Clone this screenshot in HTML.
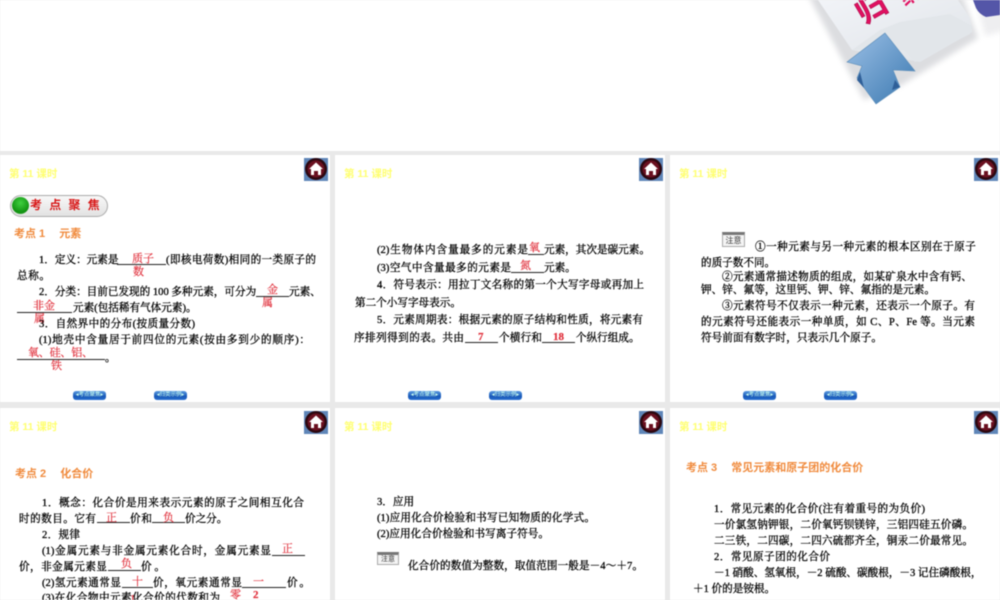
<!DOCTYPE html>
<html lang="zh"><head><meta charset="utf-8"><title>第11课时</title>
<style>
html,body{margin:0;padding:0;background:#e9e9e9;width:1000px;height:600px;overflow:hidden}
#w{position:relative;width:1000px;height:600px;overflow:hidden;filter:blur(.45px)}
.p{position:absolute;background:#fff}
.t,.r,.o,.y{position:absolute;white-space:nowrap;line-height:14px;height:14px}
.t{font-family:"Liberation Serif","Noto Serif CJK SC",serif;font-size:10.6px;color:#000;text-align:justify;text-align-last:justify;-webkit-text-stroke:.3px #000;margin-top:2px}
.r{font-family:"Liberation Serif","Noto Serif CJK SC",serif;font-size:11px;color:#e0303c;-webkit-text-stroke:.2px #e0303c;margin-top:1px}
.o{font-family:"Liberation Sans","Noto Sans CJK SC",sans-serif;font-size:11px;font-weight:bold;color:#f08a3c;margin-top:1px}
.y{font-family:"Liberation Sans","Noto Sans CJK SC",sans-serif;font-size:10.5px;font-weight:bold;color:#ffff70;left:9px;margin-top:1px}
.u{position:absolute;height:1px;background:#222}
.h{position:absolute;width:24px;height:23px}
.b{position:absolute;width:33px;height:9px;border-radius:3px;background:linear-gradient(#5a9ae0,#1858b8 60%,#2a70d0);color:#cfe;font:5.5px/9px "Liberation Sans","Noto Sans CJK SC",sans-serif;text-align:center}
.n{position:absolute;box-sizing:border-box;background:#f4f4f4;border:1px solid #aaa;border-top:3px solid #777;font:8px/11px "Liberation Sans","Noto Sans CJK SC",sans-serif;color:#333;text-align:center}
</style></head><body><div id="w">
<div class="p" style="left:0;top:0;width:1000px;height:151px"></div>
<div class="p" style="left:0;top:155px;width:330px;height:247px"></div>
<div class="p" style="left:335px;top:155px;width:330px;height:247px"></div>
<div class="p" style="left:670px;top:155px;width:330px;height:247px"></div>
<div class="p" style="left:0;top:408px;width:330px;height:192px"></div>
<div class="p" style="left:335px;top:408px;width:330px;height:192px"></div>
<div class="p" style="left:670px;top:408px;width:330px;height:192px"></div>

<svg style="position:absolute;left:0;top:0" width="1000" height="151" viewBox="0 0 1000 151">
<defs>
<linearGradient id="c" x1="0" y1="0" x2="1" y2="1"><stop offset="0" stop-color="#f2f4f8"/><stop offset="1" stop-color="#dfe3e8"/></linearGradient>
<linearGradient id="a" x1="0" y1="0" x2="1" y2="1"><stop offset="0" stop-color="#9cc0e6"/><stop offset="1" stop-color="#3a78b0"/></linearGradient>
<filter id="s" x="-20%" y="-20%" width="140%" height="140%"><feGaussianBlur stdDeviation="3"/></filter>
</defs>
<polygon points="808,-5 864,100 900,86 978,38 962,-5" fill="#dcdde0" filter="url(#s)"/>
<polygon points="975,-5 985,36 1005,30 1005,-5" fill="#eeeef0" filter="url(#s)"/>
<polygon points="818,0 852,50 920,62 972,32 970,18 958,0" fill="url(#c)"/>
<polygon points="852,50 880,30 900,22 950,14 972,26 970,34 915,62 904,50" fill="#e2e6ea"/>
<path d="M973 0 L1000 0 L1000 15 L986 17 Q979 14 976 8Z" fill="#5456a8"/>
<polygon points="885,33 847,62 862,66 857,78 876,104 900,87 893,70 915,71" fill="url(#a)" stroke="#5a8cb8" stroke-width=".6"/>
<polygon points="860,72 857,80 864,88" fill="#2f5f98"/>
<polygon points="895,80 900,87 892,90" fill="#2f5f98"/>
<text x="857" y="16" transform="rotate(-30 876 8)" font-family="Noto Sans CJK SC,sans-serif" font-size="30" font-weight="bold" fill="#e01060" stroke="#a00040" stroke-width=".5">归</text>
<text x="904" y="3" transform="rotate(-30 910 3)" font-family="Noto Sans CJK SC,sans-serif" font-size="20" font-weight="bold" fill="#e01060">纳</text>
</svg>

<!-- homes -->
<svg class="h" style="left:304px;top:158px" viewBox="0 0 24 23"><rect width="24" height="23" fill="#5f86b8"/><circle cx="12" cy="11" r="11" fill="#2c0810"/><circle cx="12" cy="11" r="8.5" fill="#6a1020"/><path d="M12 4.5L19 11H17V17H14V13H10V17H7V11H5Z" fill="#fff"/></svg>
<svg class="h" style="left:639px;top:158px" viewBox="0 0 24 23"><rect width="24" height="23" fill="#5f86b8"/><circle cx="12" cy="11" r="11" fill="#2c0810"/><circle cx="12" cy="11" r="8.5" fill="#6a1020"/><path d="M12 4.5L19 11H17V17H14V13H10V17H7V11H5Z" fill="#fff"/></svg>
<svg class="h" style="left:974px;top:158px" viewBox="0 0 24 23"><rect width="24" height="23" fill="#5f86b8"/><circle cx="12" cy="11" r="11" fill="#2c0810"/><circle cx="12" cy="11" r="8.5" fill="#6a1020"/><path d="M12 4.5L19 11H17V17H14V13H10V17H7V11H5Z" fill="#fff"/></svg>
<svg class="h" style="left:304px;top:411px" viewBox="0 0 24 23"><rect width="24" height="23" fill="#5f86b8"/><circle cx="12" cy="11" r="11" fill="#2c0810"/><circle cx="12" cy="11" r="8.5" fill="#6a1020"/><path d="M12 4.5L19 11H17V17H14V13H10V17H7V11H5Z" fill="#fff"/></svg>
<svg class="h" style="left:639px;top:411px" viewBox="0 0 24 23"><rect width="24" height="23" fill="#5f86b8"/><circle cx="12" cy="11" r="11" fill="#2c0810"/><circle cx="12" cy="11" r="8.5" fill="#6a1020"/><path d="M12 4.5L19 11H17V17H14V13H10V17H7V11H5Z" fill="#fff"/></svg>
<svg class="h" style="left:974px;top:411px" viewBox="0 0 24 23"><rect width="24" height="23" fill="#5f86b8"/><circle cx="12" cy="11" r="11" fill="#2c0810"/><circle cx="12" cy="11" r="8.5" fill="#6a1020"/><path d="M12 4.5L19 11H17V17H14V13H10V17H7V11H5Z" fill="#fff"/></svg>

<!-- yellow labels -->
<div class="y" style="top:166px">第 11 课时</div>
<div class="y" style="top:166px;left:344px">第 11 课时</div>
<div class="y" style="top:166px;left:679px">第 11 课时</div>
<div class="y" style="top:419px">第 11 课时</div>
<div class="y" style="top:419px;left:344px">第 11 课时</div>
<div class="y" style="top:419px;left:679px">第 11 课时</div>

<!-- nav buttons -->
<div class="b" style="left:73px;top:391px">◂考点聚焦▸</div><div class="b" style="left:154px;top:391px">◂归类示例▸</div>
<div class="b" style="left:408px;top:391px">◂考点聚焦▸</div><div class="b" style="left:489px;top:391px">◂归类示例▸</div>
<div class="b" style="left:743px;top:391px">◂考点聚焦▸</div><div class="b" style="left:824px;top:391px">◂归类示例▸</div>

<!-- panel 1 -->
<div style="position:absolute;left:10px;top:195px;width:98px;height:22px;box-sizing:border-box;border-radius:11px;border:1px solid #aaa;background:linear-gradient(#f8f8f8,#e2e2e2)"></div>
<div style="position:absolute;left:12px;top:197px;width:17px;height:17px;border-radius:50%;background:radial-gradient(circle at 50% 35%,#40d040,#109010 70%,#a0e0a0)"></div>
<div style="position:absolute;left:30px;top:198px;height:14px;line-height:14px;font:bold 12px/14px 'Noto Sans CJK SC',sans-serif;color:#d81818;white-space:nowrap;letter-spacing:7.2px">考点聚焦</div>
<div class="o" style="left:14px;top:226px">考点 1　 元素</div>

<div class="t" style="left:39px;top:252px;width:78px">1．定义：元素是</div>
<div class="u" style="left:117px;top:264px;width:49px"></div>
<div class="r" style="left:132px;top:251px">质子</div><div class="r" style="left:133px;top:264px">数</div>
<div class="t" style="left:166px;top:252px;width:150px">(即核电荷数)相同的一类原子的</div>
<div class="t" style="left:17px;top:268px;width:33px">总称。</div>
<div class="t" style="left:39px;top:284px;width:216px">2．分类：目前已发现的 100 多种元素，可分为</div>
<div class="u" style="left:256px;top:296px;width:33px"></div>
<div class="r" style="left:267px;top:282px">金</div><div class="r" style="left:262px;top:295px">属</div>
<div class="t" style="left:289px;top:284px;width:27px">元素、</div>
<div class="u" style="left:17px;top:312px;width:55px"></div>
<div class="r" style="left:33px;top:298px">非金</div><div class="r" style="left:34px;top:311px">属</div>
<div class="t" style="left:73px;top:300px;width:122px">元素(包括稀有气体元素)。</div>
<div class="t" style="left:39px;top:316px;width:156px">3．自然界中的分布(按质量分数)</div>
<div class="t" style="left:39px;top:332px;width:271px">(1)地壳中含量居于前四位的元素(按由多到少的顺序)：</div>
<div class="u" style="left:17px;top:359px;width:88px"></div>
<div class="r" style="left:28px;top:345px;letter-spacing:-.2px">氧、硅、铝、</div><div class="r" style="left:51px;top:358px">铁</div>
<div class="t" style="left:105px;top:350px">。</div>

<!-- panel 2 -->
<div class="t" style="left:377px;top:242px;width:151px">(2)生物体内含量最多的元素是</div>
<div class="u" style="left:528px;top:254px;width:16px"></div>
<div class="r" style="left:529px;top:240px">氧</div>
<div class="t" style="left:544px;top:242px;width:99px">元素，其次是碳元素。</div>
<div class="t" style="left:377px;top:260px;width:134px">(3)空气中含量最多的元素是</div>
<div class="u" style="left:511px;top:272px;width:33px"></div>
<div class="r" style="left:520px;top:258px">氮</div>
<div class="t" style="left:544px;top:260px;width:23px">元素。</div>
<div class="t" style="left:377px;top:277px;width:267px">4．符号表示：用拉丁文名称的第一个大写字母或再加上</div>
<div class="t" style="left:355px;top:295px;width:105px">第二个小写字母表示。</div>
<div class="t" style="left:377px;top:312px;width:266px">5．元素周期表：根据元素的原子结构和性质，将元素有</div>
<div class="t" style="left:354px;top:330px;width:110px">序排列得到的表。共由</div>
<div class="u" style="left:465px;top:342px;width:33px"></div>
<div class="r" style="left:478px;top:329px;font-weight:bold">7</div>
<div class="t" style="left:499px;top:330px;width:43px">个横行和</div>
<div class="u" style="left:542px;top:342px;width:33px"></div>
<div class="r" style="left:553px;top:329px;font-weight:bold">18</div>
<div class="t" style="left:576px;top:330px;width:60px">个纵行组成。</div>

<!-- panel 3 -->
<div class="n" style="left:722px;top:232px;width:23px;height:15px">注意</div>
<div class="t" style="left:755px;top:239px;width:221px;letter-spacing:.2px">①一种元素与另一种元素的根本区别在于原子</div>
<div class="t" style="left:701px;top:255px;width:69px">的质子数不同。</div>
<div class="t" style="left:722px;top:269px;width:250px">②元素通常描述物质的组成，如某矿泉水中含有钙、</div>
<div class="t" style="left:701px;top:282px;width:234px">钾、锌、氟等，这里钙、钾、锌、氟指的是元素。</div>
<div class="t" style="left:722px;top:298px;width:253px">③元素符号不仅表示一种元素，还表示一个原子。有</div>
<div class="t" style="left:701px;top:314px;width:274px">的元素符号还能表示一种单质，如 C、P、Fe 等。当元素</div>
<div class="t" style="left:701px;top:330px;width:181px">符号前面有数字时，只表示几个原子。</div>

<!-- panel 4 -->
<div class="o" style="left:15px;top:466px">考点 2　 化合价</div>
<div class="t" style="left:42px;top:495px;width:262px">1．概念：化合价是用来表示元素的原子之间相互化合</div>
<div class="t" style="left:19px;top:511px;width:77px">时的数目。它有</div>
<div class="u" style="left:97px;top:522px;width:33px"></div>
<div class="r" style="left:106px;top:510px">正</div>
<div class="t" style="left:130px;top:511px;width:22px">价和</div>
<div class="u" style="left:152px;top:522px;width:33px"></div>
<div class="r" style="left:163px;top:510px">负</div>
<div class="t" style="left:185px;top:511px;width:38px">价之分。</div>
<div class="t" style="left:42px;top:527px;width:38px">2．规律</div>
<div class="t" style="left:42px;top:543px;width:229px">(1)金属元素与非金属元素化合时，金属元素显</div>
<div class="u" style="left:272px;top:555px;width:33px"></div>
<div class="r" style="left:282px;top:541px">正</div>
<div class="t" style="left:19px;top:559px;width:88px">价，非金属元素显</div>
<div class="u" style="left:108px;top:570px;width:33px"></div>
<div class="r" style="left:121px;top:556px">负</div>
<div class="t" style="left:141px;top:559px;width:24px">价。</div>
<div class="t" style="left:42px;top:575px;width:79px">(2)氢元素通常显</div>
<div class="u" style="left:122px;top:587px;width:31px"></div>
<div class="r" style="left:132px;top:574px">十</div>
<div class="t" style="left:153px;top:575px;width:89px">价，氧元素通常显</div>
<div class="u" style="left:242px;top:587px;width:44px"></div>
<div class="r" style="left:253px;top:574px">一</div>
<div class="t" style="left:287px;top:575px;width:23px">价。</div>
<div class="t" style="left:42px;top:590px;width:178px">(3)在化合物中元素化合价的代数和为</div>
<div class="r" style="left:230px;top:587px">零</div>
<div class="r" style="left:253px;top:587px;font-weight:bold">2</div>
<div class="r" style="left:130px;top:591px">1</div>

<!-- panel 5 -->
<div class="t" style="left:377px;top:494px;width:37px">3．应用</div>
<div class="t" style="left:377px;top:510px;width:218px">(1)应用化合价检验和书写已知物质的化学式。</div>
<div class="t" style="left:377px;top:526px;width:172px">(2)应用化合价检验和书写离子符号。</div>
<div class="n" style="left:377px;top:552px;width:22px;height:13px;font-size:7px;line-height:9px">注意</div>
<div class="t" style="left:408px;top:558px;width:235px">化合价的数值为整数，取值范围一般是－4～＋7。</div>

<!-- panel 6 -->
<div class="o" style="left:686px;top:460px">考点 3　 常见元素和原子团的化合价</div>
<div class="t" style="left:714px;top:501px;width:211px">1．常见元素的化合价(注有着重号的为负价)</div>
<div class="t" style="left:714px;top:517px;width:259px">一价氯氢钠钾银，二价氧钙钡镁锌，三铝四硅五价磷。</div>
<div class="t" style="left:714px;top:533px;width:259px">二三铁，二四碳，二四六硫都齐全，铜汞二价最常见。</div>
<div class="t" style="left:714px;top:549px;width:116px">2．常见原子团的化合价</div>
<div class="t" style="left:714px;top:565px;width:262px">－1 硝酸、氢氧根，－2 硫酸、碳酸根，－3 记住磷酸根，</div>
<div class="t" style="left:693px;top:581px;width:79px">＋1 价的是铵根。</div>
</div></body></html>
